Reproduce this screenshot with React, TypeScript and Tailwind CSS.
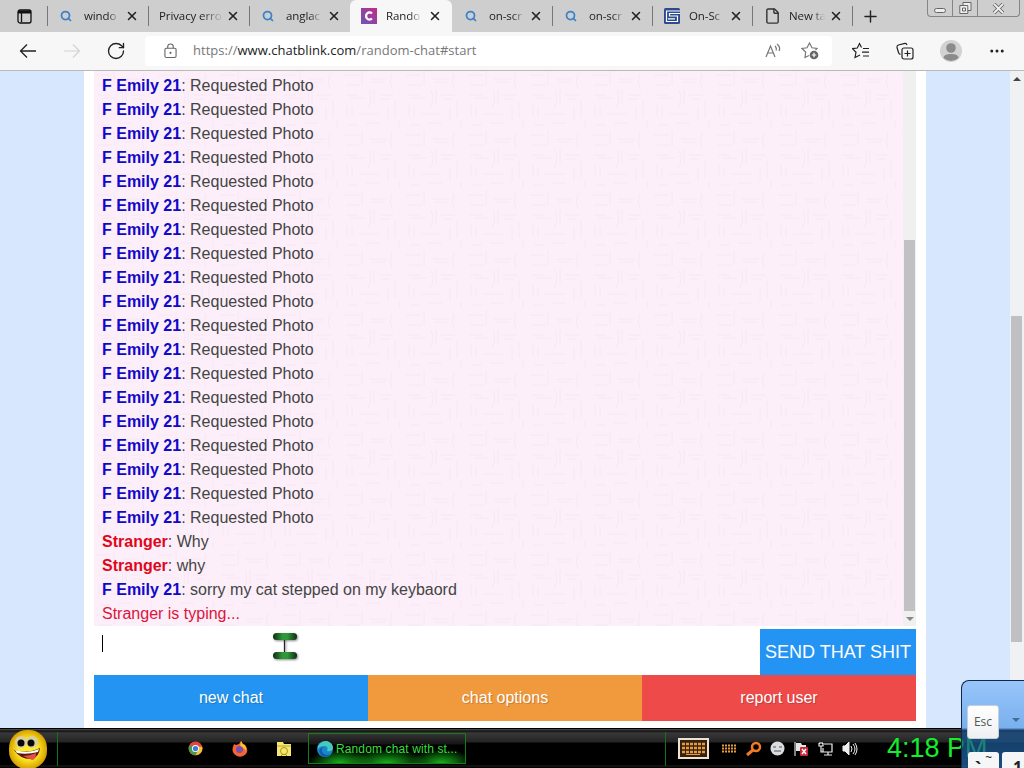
import type { ReactNode } from 'react';
import { Search, X, Plus, ArrowLeft, ArrowRight, RotateCw, Ellipsis, File } from 'lucide-react';

type Message = { name: string; text: string; own?: boolean };
type Tab = { title: string; icon?: 'search' | 'chat' | 'sc' | 'page'; active?: boolean };

const tabs: Tab[] = [
  { title: 'windo', icon: 'search' },
  { title: 'Privacy erro' },
  { title: 'anglac', icon: 'search' },
  { title: 'Rando', icon: 'chat', active: true },
  { title: 'on-scr', icon: 'search' },
  { title: 'on-scr', icon: 'search' },
  { title: 'On-Sc', icon: 'sc' },
  { title: 'New ta', icon: 'page' },
];

const messages: Message[] = [
  ...Array.from({ length: 19 }, () => ({ name: 'F Emily 21', text: 'Requested Photo' })),
  { name: 'Stranger', text: 'Why', own: true },
  { name: 'Stranger', text: 'why', own: true },
  { name: 'F Emily 21', text: 'sorry my cat stepped on my keybaord' },
];

function TabIcon({ icon }: { icon: Tab['icon'] }) {
  if (icon === 'search') return <Search className="w-3 h-3 ml-[1px] mr-[3px] text-[#3c82c8] shrink-0" strokeWidth={3.5} />;
  if (icon === 'page') {
    return <File className="w-[17px] h-[18px] -mr-px text-[#333] shrink-0" strokeWidth={2} />;
  }
  if (icon === 'chat') {
    return (
      <svg className="w-4 h-4 shrink-0" viewBox="0 0 16 16">
        <defs>
          <linearGradient id="chat" x1="0" y1="1" x2="1" y2="0">
            <stop offset="0" stopColor="#6957b8" />
            <stop offset="1" stopColor="#c42b83" />
          </linearGradient>
        </defs>
        <rect width="16" height="16" fill="url(#chat)" />
        <path d="M11 5.5a3.5 3.5 0 1 0 0 5" fill="none" stroke="#fff" strokeWidth="2.3" />
      </svg>
    );
  }
  return (
    <svg className="w-4 h-4 shrink-0" viewBox="0 0 16 16">
      <rect width="16" height="16" rx="1.5" fill="#2b4c8c" />
      <path d="M16 3H2.500v10.500h11V8H5.500V5.500H16M4 10.800h7" fill="none" stroke="#fff" strokeWidth="1.200" />
    </svg>
  );
}

function TabBar() {
  return (
    <div className="h-8 bg-[#cecece] flex">
      <div className="w-[47px] shrink-0 flex items-center pl-[17px]">
        <svg className="w-[15px] h-[15px]" viewBox="0 0 15 15" fill="none" stroke="#111" strokeWidth="1.3">
          <rect x="1" y="1" width="13" height="13" rx="2" />
          <path d="M1 3h13" strokeWidth="3" />
          <path d="M4.500 4v9" />
        </svg>
      </div>
      {tabs.map((tab, i) => (
        <div
          key={i}
          className={
            tab.active
              ? 'w-[102px] h-8 shrink-0 flex items-center bg-[#f7f7f7] rounded-t-md pl-[11px] pr-[10px]'
              : `${i > 3 ? 'w-[100px]' : 'w-[101px]'} h-8 shrink-0 flex items-center pl-3 pr-[9px] bg-[linear-gradient(#777,#777)] bg-no-repeat bg-[size:1px_20px] ${i === 4 ? 'bg-[position:-2px_6px]' : 'bg-[position:0_6px]'}`
          }
        >
          {tab.icon && <TabIcon icon={tab.icon} />}
          <span className={`${tab.icon ? 'ml-[9px] w-[36px]' : '-ml-px w-[65px]'} text-[11.5px] tracking-[-0.1px] text-[#222] whitespace-nowrap overflow-hidden [mask-image:linear-gradient(to_right,#000_65%,transparent)]`}>
            {tab.title}
          </span>
          <X className="w-[14px] h-[14px] ml-auto text-[#222] shrink-0" strokeWidth={2.6} />
        </div>
      ))}
      <div className="w-9 flex items-center justify-center bg-[linear-gradient(#777,#777)] bg-no-repeat bg-[size:1px_20px] bg-[position:0_6px]">
        <Plus className="w-[19px] h-[19px] text-[#222]" strokeWidth={1.8} />
      </div>
      <div className="ml-auto mr-1 h-[17px] w-[93px] flex border border-t-0 border-[#858585] rounded-b-[4px]">
        <div className="w-[25px] flex items-center justify-center border-r border-[#858585]">
          <span className="w-3 h-[5px] mt-1 border border-[#666] rounded-sm bg-[#eee]" />
        </div>
        <div className="w-[25px] flex items-center justify-center border-r border-[#858585]">
          <svg className="w-[13px] h-[13px]" viewBox="0 0 13 13" fill="#eee" stroke="#666">
            <path d="M4 .5h8v8H4z" />
            <path d="M.8 3.5h8v8h-8zM3.5 6h3v3h-3z" />
          </svg>
        </div>
        <div className="flex-1 flex items-center justify-center">
          <svg className="w-[13px] h-[11px]" viewBox="0 0 13 11">
            <path d="M2 1l9 9M11 1l-9 9" stroke="#666" strokeWidth="3.6" />
            <path d="M2 1l9 9M11 1l-9 9" stroke="#eee" strokeWidth="1.8" />
          </svg>
        </div>
      </div>
    </div>
  );
}

function Toolbar() {
  return (
    <div className="h-[39px] bg-[#f7f7f7] border-b border-[#b9b9bc] flex items-center text-[#222]">
      <svg className="w-5 h-5 ml-[18px]" viewBox="0 0 20 20" fill="none" stroke="#222" strokeWidth="1.300">
        <path d="M18 10H2.500M9 3.500L2.500 10 9 16.500" />
      </svg>
      <svg className="w-5 h-5 ml-6" viewBox="0 0 20 20" fill="none" stroke="#d2d2d2" strokeWidth="1.200">
        <path d="M2 10h15.500M11 3.500l6.500 6.500-6.500 6.500" />
      </svg>
      <RotateCw className="w-5 h-5 ml-6" strokeWidth={1.6} />
      <div className="ml-[19px] h-[30px] w-[687px] bg-white rounded flex items-center">
        <svg className="w-[13px] h-4 ml-[19px]" viewBox="0 0 14 16" fill="none" stroke="#666" strokeWidth="1.2">
          <rect x="1" y="5" width="12" height="10" rx="1.5" />
          <path d="M4 5V3.5a3 3 0 0 1 6 0V5" />
          <circle cx="7" cy="10" r=".6" fill="#555" />
        </svg>
        <span className="ml-[16px] text-[13px] tracking-[0.02px] whitespace-nowrap text-[#777]">
          https://<span className="text-[#222]">www.chatblink.com</span>/random-chat#start
        </span>
        <svg className="w-4 h-4 ml-auto" viewBox="0 0 16 16" fill="none" stroke="#777" strokeWidth="1.2">
          <path d="M1 14L5.500 3 10 14M2.800 10h5.500M10 3q2 2 1 4.500M12 1q4 3 2 7" />
        </svg>
        <svg className="w-[18px] h-[18px] ml-5 mr-[13px]" viewBox="0 0 18 18" fill="none" stroke="#777" strokeWidth="1.2">
          <path d="M14.500 8L16 6.500l-5-.7L8.500 1 6 5.800l-5 .7L4.700 10 4 15.500l4-2" />
          <circle cx="13" cy="13" r="4.300" fill="#666" stroke="none" />
          <path d="M13 10.800v4.400M10.800 13h4.400" stroke="#fff" />
        </svg>
      </div>
      <svg className="w-[18px] h-[18px] ml-[20px]" viewBox="0 0 18 18" fill="none" stroke="#222" strokeWidth="1.200">
        <path d="M9.500 5.500L7.500 1.500 5.300 6l-4.800.6L4 10.300 3 15.500l5-2.500M11 6.500h6M10 10.200h7M11 14h6" />
      </svg>
      <svg className="w-[18px] h-[18px] ml-[26px]" viewBox="0 0 18 18" fill="none" stroke="#222" strokeWidth="1.200">
        <path d="M4.500 12.500Q3 12 2.500 10.500L1 5.500Q.7 3.700 2.300 3L9 1.300q1.500-.2 2 1.700" />
        <rect x="6" y="6" width="11" height="11" rx="2" />
        <path d="M11.500 8.500v6M8.500 11.500h6" />
      </svg>
      <svg className="w-[22px] h-[22px] ml-[26px]" viewBox="0 0 22 22">
        <circle cx="11" cy="11" r="11" fill="#d2d2d2" />
        <circle cx="11" cy="8" r="4.800" fill="#8b8b8b" />
        <path d="M3.500 18q0-4 7.500-4t7.500 4Q15 21 11 21t-7.500-3" fill="#8b8b8b" />
      </svg>
      <Ellipsis className="w-[18px] h-[18px] ml-[26px]" strokeWidth={2} />
    </div>
  );
}

function ChatLog() {
  return (
    <div className="h-[555px] flex bg-[#fceff9] relative">
      {/* faint woven background */}
      <svg className="absolute inset-0 w-full h-full" aria-hidden="true">
        <pattern id="weave" width="62" height="60" patternUnits="userSpaceOnUse">
          <path
            d="M2 4h15M20 0v14M4 14h14M28 8h17M30 11h13M50 2q-3 8 0 16M4 24h12M8 27h15M27 19q4 9-1 18M32 18v15M37 24h14M39 28h9M5 34v12M10 36v10M17 43h20M46 36v14M53 30v17M24 52h14M6 54h10M57 50v8"
            fill="none"
            stroke="#f6e8f3"
            strokeWidth="1"
          />
        </pattern>
        <rect width="100%" height="100%" fill="url(#weave)" />
      </svg>
      <div className="relative flex-1 pl-2 pt-[3px] text-[16px] leading-6 text-[#444]">
        {messages.map((msg, i) => (
          <p key={i}>
            <b className={msg.own ? 'text-[#e1061b]' : 'text-[#1208c8]'}>{msg.name}</b>: {msg.text}
          </p>
        ))}
        <p className="text-[#dc143c]">Stranger is typing...</p>
      </div>
      <div className="relative w-[13px] bg-[#f0f0f1] flex flex-col justify-end pl-[1px]">
        <div className="w-[11px] h-[371px] bg-[#c1c1c3]" />
        <div className="h-[15px] flex items-center justify-center">
          <span className="border-x-4 border-x-transparent border-t-4 border-t-[#888]" />
        </div>
      </div>
    </div>
  );
}

function ChatButton({ className, children }: { className: string; children: ReactNode }) {
  return (
    <button className={`flex-1 h-[46px] text-white text-[16px] [text-shadow:1px_1px_1px_#0003] ${className}`}>
      {children}
    </button>
  );
}

function TextCursor() {
  return (
    <svg className="absolute left-[178px] top-1 w-[28px] h-[29px] drop-shadow-[1px_1px_1px_#888]" viewBox="0 0 28 29">
      <defs>
        <linearGradient id="bar">
          <stop offset="0" stopColor="#102c13" />
          <stop offset=".4" stopColor="#309839" />
          <stop offset=".6" stopColor="#309839" />
          <stop offset="1" stopColor="#102c13" />
        </linearGradient>
      </defs>
      <path d="M12.500 6v15" stroke="#222" strokeWidth="1.200" />
      <rect x="1" y="0" width="24" height="7" rx="3.500" fill="url(#bar)" />
      <rect x="1" y="19" width="24" height="7" rx="3.500" fill="url(#bar)" />
    </svg>
  );
}

function Page() {
  return (
    <div className="h-[657px] bg-[#d7e7fe] flex font-['Liberation_Sans',sans-serif]">
      <div className="ml-[84px] w-[842px] bg-white px-[10px]">
        <ChatLog />
        <div className="h-[49px] pt-[3px] flex">
          <div className="flex-1 relative">
            <span className="block ml-2 mt-[6px] w-px h-[17px] bg-black" />
            <TextCursor />
          </div>
          <button className="w-[156px] h-[46px] bg-[#2394f4] text-white text-[18px] whitespace-nowrap">SEND THAT SHIT</button>
        </div>
        <div className="flex">
          <ChatButton className="bg-[#2394f1]">new chat</ChatButton>
          <ChatButton className="bg-[#f19a3d]">chat options</ChatButton>
          <ChatButton className="bg-[#ee4a49]">report user</ChatButton>
        </div>
      </div>
      <div className="ml-auto w-[14px] bg-[#f0f1f2]">
        <div className="h-[245px] flex justify-center pt-[6px]">
          <span className="h-0 border-x-4 border-x-transparent border-b-4 border-b-[#444]" />
        </div>
        <div className="ml-[1px] w-[11px] h-[326px] bg-[#c0c0c2]" />
      </div>
    </div>
  );
}

function StartFace() {
  return (
    <svg className="w-[40px] h-[40px] ml-2" viewBox="0 0 40 40">
      <defs>
        <radialGradient id="face">
          <stop offset=".5" stopColor="#ffed25" />
          <stop offset="1" stopColor="#d8a100" />
        </radialGradient>
      </defs>
      <rect x="1" y="1" width="38" height="39" rx="18" fill="url(#face)" />
      <circle cx="13" cy="13" r="6" fill="#d9cfa0" />
      <circle cx="24" cy="13" r="6" fill="#d9cfa0" />
      <circle cx="13" cy="14" r="3.500" fill="#090909" />
      <circle cx="23" cy="14" r="3.500" fill="#090909" />
      <path d="M6 21q14 4 26-2-1 9-8 11Q13 31 6 21" fill="#5e1510" />
      <path d="M7 21q13 4 24-1l-1 3q-11 3-21 1z" fill="#fff" />
      <path d="M15 27q7 0 13-3 0 7-4 7z" fill="#e45143" />
    </svg>
  );
}

function Taskbar() {
  return (
    <div className="h-10 border-t border-black bg-[linear-gradient(#555_0,#111_2px,#383838_4px,#242424_13px,#000_14px,#000_36px,#222_37px,#000_38px)] flex items-center font-['Liberation_Sans',sans-serif]">
      <StartFace />
      <span className="ml-[9px] w-px h-[34px] bg-[#16711e]" />
      <svg className="w-[15px] h-[15px] ml-[130px] mr-px" viewBox="0 0 16 16">
        <circle cx="8" cy="8" r="7.500" fill="#df493c" />
        <path d="M1.500 5A7 7 0 0 0 8 15l3-6-3-2z" fill="#3c9e4b" />
        <path d="M15 6a7 7 0 0 1-7 9l4-7-2-2z" fill="#edc635" />
        <circle cx="8" cy="8" r="3.800" fill="#fff" />
        <circle cx="8" cy="8" r="2.800" fill="#397be2" />
      </svg>
      <svg className="w-4 h-4 ml-7" viewBox="0 0 16 16">
        <path d="M2 3l2 1 3-1 2-3q1 3 4 4 4 5 1 9-4 4-9 2-6-3-4-9z" fill="#f8652b" />
        <path d="M9 0q1 3 4 4 2 3 1 6-2-4-6-4z" fill="#ffc427" />
        <circle cx="7.500" cy="8.500" r="3.500" fill="#7550b5" />
      </svg>
      <svg className="w-4 h-4 ml-7" viewBox="0 0 16 16">
        <path d="M1 1h6l1 2h7v12H1z" fill="#f5e76f" />
        <path d="M1 5h14" stroke="#c4a42d" />
        <circle cx="8" cy="10" r="3.500" fill="none" stroke="#a8961e" />
        <path d="M5 15l2-2M11 15l-2-2" stroke="#9d8c19" />
      </svg>
      <div className="ml-[16px] w-[158px] h-[31px] flex items-center pl-2 border border-[#167d19] bg-[radial-gradient(32px_14px_at_20%_100%,#17b51b,transparent),radial-gradient(40px_14px_at_50%_100%,#17b51b,transparent),radial-gradient(32px_14px_at_85%_100%,#17b51b,transparent),linear-gradient(#333,#151515_10px,#000_11px)]">
        <svg className="w-4 h-4 shrink-0" viewBox="0 0 16 16">
          <circle cx="8" cy="8" r="8" fill="#1687cc" />
          <path d="M1 5q3-5 9-5 6 2 6 7-1 4-6 3 2-5-3-5-4 0-6 3" fill="#48c9bd" />
          <path d="M6 6q-4 6 4 8l3-1q-3 4-8 2-6-6 1-9" fill="#1459a8" />
        </svg>
        <span className="ml-[3px] text-[12px] tracking-[0.12px] text-[#35df3d] whitespace-nowrap">Random chat with st...</span>
      </div>
      <span className="ml-[199px] w-px h-[34px] bg-[#16711e]" />
      <svg className="w-[31px] h-[21px] ml-[12px]" viewBox="0 0 31 21">
        <rect x="1" y="1" width="29" height="19" fill="#35210d" stroke="#eee1d6" strokeWidth="2" />
        <path d="M4 6h23M4 10h23M4 14h23" stroke="#e59b3e" strokeWidth="2.500" strokeDasharray="3 1" />
        <path d="M8 16.500h14" stroke="#e59b3e" />
      </svg>
      <svg className="w-[15px] h-[10px] ml-[13px]" viewBox="0 0 15 10">
        <path d="M0 1.500h15M0 4.500h15M0 7.500h15" stroke="#e59b3e" strokeWidth="2" strokeDasharray="2 1" />
      </svg>
      <svg className="w-4 h-4 ml-[9px]" viewBox="0 0 16 16" fill="none" stroke="#f27b20">
        <circle cx="10" cy="6" r="4" strokeWidth="2.500" />
        <path d="M7 9l-6 5" strokeWidth="3" />
      </svg>
      <svg className="w-[15px] h-[15px] ml-[8px]" viewBox="0 0 15 15" fill="none" stroke="#555">
        <circle cx="7.500" cy="7.500" r="7" fill="#d9dddf" stroke="none" />
        <path d="M3 6h3M9 6h3M4 10h7" />
      </svg>
      <svg className="w-4 h-4 ml-[8px]" viewBox="0 0 16 16">
        <path d="M2 1v14" stroke="#fff" />
        <path d="M3 2h5l1 2h4v6H3z" fill="#e6e6e6" />
        <rect x="7" y="6" width="8" height="9" rx="1" fill="#c92738" />
        <path d="M9 8l4 5M13 8l-4 5" stroke="#fff" strokeWidth="1.500" />
      </svg>
      <svg className="w-4 h-4 ml-[9px]" viewBox="0 0 16 16" fill="none" stroke="#eee" strokeWidth="1.200">
        <path d="M6 3h8v8H5V7M10 11v3M6 14h8M1 2v3h4V2M2 1v2M4 1v2M3 5v6h2" />
      </svg>
      <svg className="w-4 h-4 ml-[8px]" viewBox="0 0 16 16" fill="none" stroke="#eee">
        <path d="M1 5h2l4-4v13l-4-4H1z" fill="#eee" />
        <path d="M9 5q2 3 0 6M11 3q4 5 0 10M13 2q4 6 0 12" />
      </svg>
      <span className="ml-[29px] text-[27px] leading-none text-[#13ef2c] whitespace-nowrap">4:18 PM</span>
    </div>
  );
}

function OnScreenKeyboard() {
  return (
    <div className="absolute left-[961px] top-[680px] w-[63px] h-[88px] overflow-hidden rounded-tl-[8px] border-l border-t border-[#10284c] bg-[linear-gradient(#98c5fb_0,#79b0ed_47px,#164d87b8_49px,#2467a9b8_80px)]">
      <div className="mt-6 ml-[5px] flex items-center">
        <div className="w-8 h-[34px] rounded-[3px] border border-[#c4d0dc] bg-[linear-gradient(#fff,#edf0f2)] text-[12px] text-[#555] flex items-center justify-center">Esc</div>
        <span className="ml-[13px] -mt-1 border-x-4 border-x-transparent border-t-4 border-t-[#456c95]" />
      </div>
      <div className="mt-[13px] ml-[6px] flex gap-[3px] text-[#222]">
        <div className="w-[31px] h-7 shrink-0 rounded-[3px] bg-[#f4f6f8] flex justify-center gap-1 leading-none">
          <b className="mt-[7px] text-[18px]">`</b>
          <span className="text-[12px]">~</span>
        </div>
        <div className="w-[31px] h-7 shrink-0 rounded-[3px] bg-[#f4f6f8] text-center pt-[7px] text-[16px] leading-none font-bold">1</div>
      </div>
    </div>
  );
}

export default function App() {
  return (
    <div className="relative w-[1024px] h-[768px] overflow-hidden bg-white font-['Open_Sans',sans-serif]">
      <TabBar />
      <Toolbar />
      <Page />
      <Taskbar />
      <OnScreenKeyboard />
    </div>
  );
}
